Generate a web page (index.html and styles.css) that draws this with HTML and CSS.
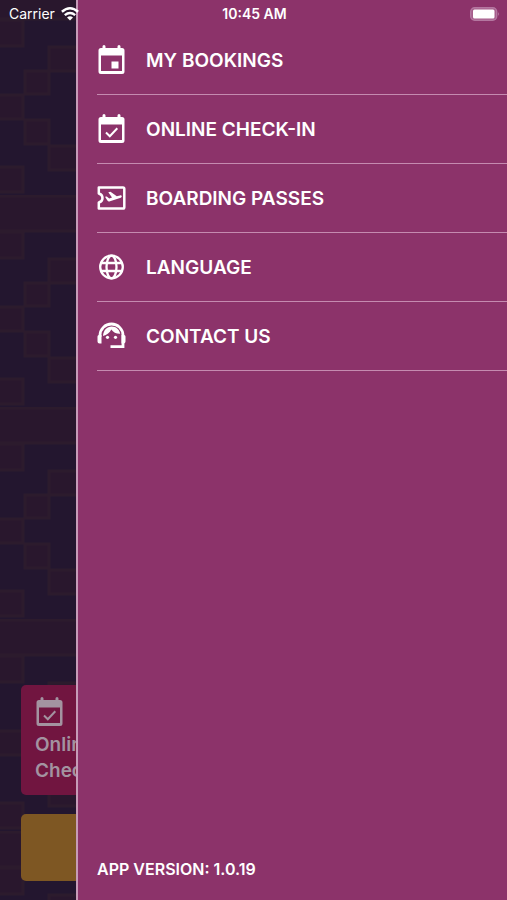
FILE: index.html
```html
<!DOCTYPE html>
<html lang="en">
<head>
<meta charset="utf-8">
<meta name="viewport" content="width=device-width, initial-scale=1">
<title>Menu</title>
<link rel="stylesheet" href="styles.css">
</head>
<body>
<svg class="symbols" aria-hidden="true">
  <symbol id="calendar-check" viewBox="0 0 28 30">
    <path fill="currentColor" fill-rule="evenodd" d="M5 1.500a1.500 1.500 0 0 1 3 0V3h12V1.500a1.500 1.500 0 0 1 3 0V3h1.500A2.500 2.500 0 0 1 27 5.500v21a2.500 2.500 0 0 1-2.500 2.500h-21A2.500 2.500 0 0 1 1 26.500v-21A2.500 2.500 0 0 1 3.500 3H5zM3.500 10.500v15.500h21V10.500z"/>
    <path fill="none" stroke="currentColor" stroke-width="2" d="m8.500 18.500 3.800 3.700 7.500-8"/>
  </symbol>
</svg>
<div class="app">
  <main class="home">
    <svg class="weave" aria-hidden="true">
      <defs>
        <pattern id="blocks" width="76" height="212" y="-17" patternUnits="userSpaceOnUse">
          <g fill="#29172d" stroke="#2c1b2d" stroke-width="3">
            <path d="M-3 1h84v35h-84z"/>
            <path d="M-3 37h26v26H-3zM49 64h30v24H49zM25 88h24v23H25zM-3 112h26v24H-3zM25 137h24v24H25zM49 163h30v24H49zM-3 184h26v25H-3z"/>
          </g>
        </pattern>
      </defs>
      <rect width="100%" height="100%" fill="url(#blocks)"/>
    </svg>
    <div class="tiles">
      <a class="tile tile-checkin" href="#checkin">
        <svg class="tile-icon" aria-hidden="true"><use href="#calendar-check"/></svg>
        <span>Online<br>Check-in</span>
      </a>
      <a class="tile tile-book" href="#book" aria-label="Book"></a>
    </div>
  </main>

  <aside class="drawer">
    <nav>
      <ul class="menu">
        <li><a class="item" href="#bookings">
          <svg class="icon" viewBox="0 0 28 30" aria-hidden="true"><path fill="currentColor" fill-rule="evenodd" d="M5 1.500a1.500 1.500 0 0 1 3 0V3h12V1.500a1.500 1.500 0 0 1 3 0V3h1.500A2.500 2.500 0 0 1 27 5.500v21a2.500 2.500 0 0 1-2.500 2.500h-21A2.500 2.500 0 0 1 1 26.500v-21A2.500 2.500 0 0 1 3.500 3H5zM3.500 10.500v15.500h21V10.500zM14 16.500h7v7h-7z"/></svg>
          MY BOOKINGS</a></li>
        <li><a class="item" href="#checkin">
          <svg class="icon" aria-hidden="true"><use href="#calendar-check"/></svg>
          ONLINE CHECK-IN</a></li>
        <li><a class="item" href="#passes">
          <svg class="icon" viewBox="0 0 28 30" aria-hidden="true">
            <path fill="none" stroke="currentColor" stroke-width="2.500" stroke-linejoin="round" d="M1.300 4.500h24.200a1.300 1.300 0 0 1 1.300 1.300v18.400a1.300 1.300 0 0 1-1.300 1.300H1.300v-6q3.700-1 3.700-4.500T1.300 10.500z"/>
            <path fill="currentColor" d="m7.500 13.800 1.700-.4 2.600 2 2.700-.8-3.700-5.300 2.200-.6 6.300 4.600 3.200-.9c1.900-.5 2.500 1.700.8 2.300l-10.800 3.500c-1.300.4-2 .1-2.600-.7z"/>
          </svg>
          BOARDING PASSES</a></li>
        <li><a class="item" href="#language">
          <svg class="icon" viewBox="0 0 28 30" aria-hidden="true">
            <g fill="none" stroke="currentColor" stroke-width="2.300"><circle cx="14" cy="15" r="11.300"/><ellipse cx="14" cy="15" rx="5" ry="11.300"/><path d="M3.500 11h21M3.500 19h21"/></g>
          </svg>
          LANGUAGE</a></li>
        <li><a class="item" href="#contact">
          <svg class="icon" viewBox="0 0 28 30" aria-hidden="true">
            <path fill="none" stroke="currentColor" stroke-width="2.800" d="M2.500 16v-1.500a11.500 11.500 0 0 1 23 0V25.600H13"/>
            <path fill="currentColor" d="M0 15.500q0-1.500 1.500-1.500H4v8.500H2q-2 0-2-2zM24 14h2.500q1.500 0 1.500 1.500V20.500q0 2-2 2h-2zM5.500 15C6 9 9.500 5.600 14.200 5.600c4.300 0 7.700 2.800 8.500 7.200-4 .1-7-1.500-8.900-4.300C12.300 11.500 9.500 13.900 5.500 15z"/>
            <circle cx="10" cy="16.300" r="1.600" fill="currentColor"/><circle cx="18" cy="16.300" r="1.600" fill="currentColor"/>
          </svg>
          CONTACT US</a></li>
      </ul>
    </nav>
    <p class="version">APP VERSION: 1.0.19</p>
  </aside>

  <header class="status">
    <span class="carrier">Carrier
      <svg class="wifi" viewBox="0 0 18 14" aria-hidden="true"><g fill="none" stroke="currentColor" stroke-width="2.500"><path d="M.9 4.800q8.100-7 16.200 0M3.800 8.100q5.200-4.300 10.400 0"/></g><path fill="currentColor" d="M6 10.600q3-2.500 6 0l-3 3z"/></svg>
    </span>
    <time>10:45 AM</time>
    <svg class="battery" viewBox="0 0 30 14" aria-hidden="true"><rect x=".7" y=".7" width="26" height="12.600" rx="4" fill="#a65d8b" stroke="#b477a0" stroke-width="1.400"/><path fill="#bd83a8" d="M28.200 5q1.800 2 0 4z"/><rect x="3" y="2.600" width="21.500" height="8.800" rx="1.500" fill="#fff"/></svg>
  </header>
</div>
</body>
</html>
```
FILE: styles.css
```css
* {
  box-sizing: border-box;
}

body {
  margin: 0;
  font-family: "Inter", "Liberation Sans", sans-serif;
  color: #fff;
}

a {
  color: inherit;
  text-decoration: none;
}

.symbols {
  position: absolute;
  width: 0;
  height: 0;
}

.app {
  position: relative;
  min-height: 100vh;
  overflow: hidden;
  display: flex;
  background: #23162f;
}

.home {
  flex: 1;
  display: flex;
  flex-direction: column;
  justify-content: flex-end;
  padding: 0 21px 19px;
}

.weave {
  position: absolute;
  inset: 0;
  width: 100%;
  height: 100%;
}

.tiles {
  position: relative;
  display: grid;
  gap: 19px;
}

.tile {
  border-radius: 5px;
}

.tile-checkin {
  display: flex;
  flex-direction: column;
  height: 110px;
  padding: 12px 14px;
  background: #711540;
  color: #a393a0;
  font-size: 19px;
  font-weight: 600;
  line-height: 26px;
}

.tile-icon {
  width: 29px;
  height: 30px;
  margin-bottom: 5px;
  flex: none;
}

.tile-book {
  height: 67px;
  background: #7e5723;
}

.drawer {
  position: absolute;
  inset: 0 0 0 15%;
  display: flex;
  flex-direction: column;
  justify-content: space-between;
  padding: 26px 0 21px 19px;
  background: #8c336a;
  border-left: 2px solid #c69bb8;
}

.menu {
  margin: 0;
  padding: 0;
  list-style: none;
}

.item {
  display: flex;
  align-items: center;
  gap: 20px;
  height: 69px;
  border-bottom: 1px solid #c58bb0;
  font-size: 19px;
  font-weight: 600;
}

.icon {
  width: 29px;
  height: 30px;
  flex: none;
}

.version {
  margin: 0;
  font-size: 16px;
  font-weight: 600;
  line-height: 20px;
}

.status {
  position: absolute;
  inset: 0 0 auto;
  display: grid;
  grid-template-columns: 1fr auto 1fr;
  align-items: center;
  height: 27px;
  padding: 0 7px 0 9px;
  font-size: 14px;
}

.status time {
  font-weight: 600;
}

.carrier {
  display: flex;
  align-items: center;
  gap: 6px;
}

.wifi {
  width: 18px;
  height: 14px;
}

.battery {
  width: 30px;
  height: 14px;
  justify-self: end;
}
```
